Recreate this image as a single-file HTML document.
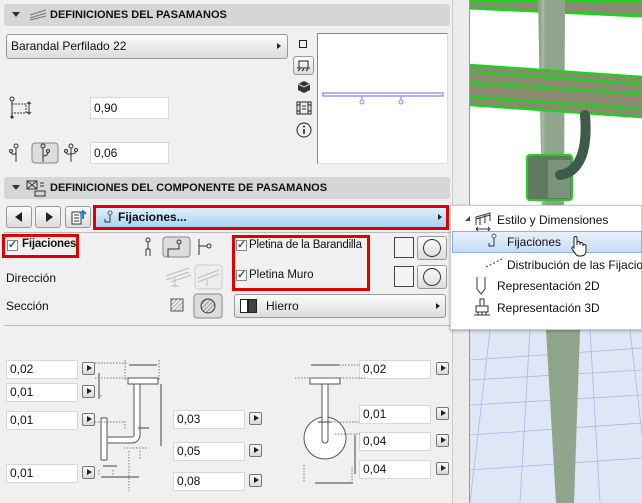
<!DOCTYPE html>
<html><head><meta charset="utf-8"><style>
*{box-sizing:border-box;margin:0;padding:0}
body{width:642px;height:503px;overflow:hidden;background:#f0f0f0;font-family:"Liberation Sans",sans-serif;font-size:11px;color:#111;position:relative}
.a{position:absolute}
.hdr{position:absolute;left:4px;width:446px;height:22px;background:#d6d6d6;border-radius:3px;font-weight:bold;font-size:11px;line-height:22px}
.inp{position:absolute;width:72px;height:19px;background:#fff;border:1px solid #d8d8d8;font-size:12px;line-height:17px;padding-left:3px}
.ab{position:absolute;width:13px;height:13px;border:1px solid #777;border-radius:2px;background:linear-gradient(#fafafa,#d8d8d8)}
.ab:after{content:"";position:absolute;left:4px;top:2px;border-left:5px solid #222;border-top:3.5px solid transparent;border-bottom:3.5px solid transparent}
.btn{position:absolute;border:1px solid #999;border-radius:3px;background:linear-gradient(#fcfcfc,#dcdcdc)}
.red{position:absolute;border:3px solid #e00000}
.cb{position:absolute;width:11px;height:11px;border:1px solid #888;background:#fff;font-size:11px;line-height:9px;color:#2a4fb0;text-align:center;font-weight:bold}
</style></head><body>
<div class="hdr" style="top:4px"><span class="a" style="left:8px;top:8px;border-top:5px solid #333;border-left:4px solid transparent;border-right:4px solid transparent"></span>
<svg class="a" style="left:25px;top:5px" width="18" height="12"><path d="M1 6 L17 1 M1 9 L17 4 M1 11 L17 7" stroke="#777" fill="none"/></svg>
<span class="a" style="left:46px">DEFINICIONES DEL PASAMANOS</span></div>
<div class="btn" style="left:6px;top:34px;width:282px;height:25px;border-radius:3px;font-size:12px;line-height:23px;padding-left:4px">Barandal Perfilado 22<span class="a" style="right:6px;top:8px;border-left:4px solid #222;border-top:3.5px solid transparent;border-bottom:3.5px solid transparent"></span></div>
<div class="a" style="left:299px;top:40px;width:8px;height:8px;border:1px solid #222"></div>
<div class="btn" style="left:293px;top:56px;width:21px;height:19px"><svg width="19" height="17"><path d="M5 11V4h9v7M3 11h13M4 14l2-2M8 14l2-2M12 14l2-2" stroke="#222" fill="none"/></svg></div>
<svg class="a" style="left:297px;top:80px" width="14" height="14"><path d="M7 1 L13 4 L13 10 L7 13 L1 10 L1 4Z" fill="#333"/><path d="M1 4 L7 7 L13 4" stroke="#ddd" fill="none"/></svg>
<svg class="a" style="left:296px;top:101px" width="16" height="14"><rect x="1" y="1" width="14" height="12" fill="none" stroke="#222"/><path d="M4 1v12M12 1v12M6 5h4M6 8h4M1 4h3M1 10h3M12 4h3M12 10h3" stroke="#222"/></svg>
<svg class="a" style="left:296px;top:122px" width="16" height="16"><circle cx="8" cy="8" r="7" fill="none" stroke="#222"/><path d="M8 7v5" stroke="#222" stroke-width="1.6"/><circle cx="8" cy="4.5" r="1" fill="#222"/></svg>
<div class="a" style="left:317px;top:33px;width:131px;height:131px;background:#fff;border:1px solid #888;border-right-color:#ddd;border-bottom-color:#ddd"></div>
<svg class="a" style="left:318px;top:90px" width="128" height="16"><rect x="5" y="3" width="120" height="3" fill="none" stroke="#8888ee" stroke-width="1.3"/><circle cx="44" cy="12" r="2" fill="none" stroke="#8888ee"/><circle cx="83" cy="12" r="2" fill="none" stroke="#8888ee"/><path d="M44 6v4M83 6v4" stroke="#8888ee"/></svg>
<svg class="a" style="left:8px;top:96px" width="24" height="24"><circle cx="4" cy="3" r="2" fill="none" stroke="#333"/><path d="M4 5v15" stroke="#333"/><path d="M4 8h14v9H4" stroke="#333" stroke-dasharray="2 1" fill="none"/><path d="M21 6v12M19 8l2-2 2 2M19 16l2 2 2-2" stroke="#333" fill="none"/><path d="M2 21l2-2 2 2-2 2z" fill="#333"/></svg>
<div class="inp" style="left:90px;top:97px;width:79px;height:22px;line-height:20px">0,90</div>
<svg class="a" style="left:8px;top:142px" width="82" height="22"><g stroke="#333" fill="none"><circle cx="8" cy="4" r="2"/><path d="M8 6v14M3 10c0 3 5 3 5 0"/><circle cx="3" cy="9" r="1.5"/></g><rect x="24" y="1" width="26" height="20" rx="3" fill="#ddd" stroke="#888"/><g stroke="#333" fill="none"><circle cx="35" cy="4" r="2"/><path d="M35 6v14M35 14c4 0 5-2 5-4"/><circle cx="40" cy="9" r="1.5"/><circle cx="63" cy="4" r="2"/><path d="M63 6v14M58 10c0 3 5 3 5 0M63 12c3 0 5-1 5-3"/><circle cx="58" cy="9" r="1.5"/><circle cx="68" cy="8" r="1.5"/></g></svg>
<div class="inp" style="left:90px;top:142px;width:79px;height:22px;line-height:20px">0,06</div>
<div class="hdr" style="top:177px"><span class="a" style="left:8px;top:8px;border-top:5px solid #333;border-left:4px solid transparent;border-right:4px solid transparent"></span>
<svg class="a" style="left:22px;top:3px" width="20" height="17"><rect x="1" y="1" width="10" height="8" fill="none" stroke="#333"/><path d="M1 1l10 8M11 1L1 9M14 3h4M14 6h4M9 11h10v5H9z" stroke="#333" fill="none"/></svg>
<span class="a" style="left:46px">DEFINICIONES DEL COMPONENTE DE PASAMANOS</span></div>
<div class="btn" style="left:6px;top:206px;width:26px;height:22px"><span class="a" style="left:8px;top:5px;border-right:7px solid #222;border-top:5px solid transparent;border-bottom:5px solid transparent"></span></div>
<div class="btn" style="left:35px;top:206px;width:26px;height:22px"><span class="a" style="left:10px;top:5px;border-left:7px solid #222;border-top:5px solid transparent;border-bottom:5px solid transparent"></span></div>
<div class="btn" style="left:65px;top:206px;width:26px;height:22px"><svg width="24" height="20"><path d="M6 5h9v12H6z" fill="#fff" stroke="#333"/><path d="M8 8h5M8 11h5M8 14h5" stroke="#333"/><path d="M17 12V4M14 7l3-3 3 3" stroke="#2a7be0" stroke-width="2" fill="none"/></svg></div>
<div class="a" style="left:96px;top:208px;width:350px;height:19px;background:linear-gradient(#dff0fc,#a9d3f2);font-weight:bold;font-size:12px;line-height:19px;padding-left:22px">Fijaciones...<svg class="a" style="left:6px;top:2px" width="12" height="15"><circle cx="8" cy="3" r="2" fill="none" stroke="#666"/><path d="M8 5v7H3V9" stroke="#333" fill="none"/></svg><span class="a" style="right:4px;top:6px;border-left:4px solid #222;border-top:3.5px solid transparent;border-bottom:3.5px solid transparent"></span></div>
<div class="red" style="left:93px;top:205px;width:356px;height:25px"></div>
<div class="a" style="left:4px;top:232px;width:446px;height:1px;background:#bbb"></div>
<div class="cb" style="left:7px;top:240px">✓</div>
<div class="a" style="left:22px;top:238px;font-weight:bold;font-size:11.5px;letter-spacing:-0.2px">Fijaciones</div>
<div class="red" style="left:2px;top:234px;width:77px;height:24px"></div>
<svg class="a" style="left:143px;top:236px" width="72" height="22"><g stroke="#333" fill="none"><circle cx="5" cy="4" r="2"/><path d="M5 6v7M3 13v7M7 13v7M3 13h4"/></g><rect x="20" y="1" width="27" height="20" rx="3" fill="#ddd" stroke="#888"/><g stroke="#333" fill="none"><circle cx="36" cy="6" r="2"/><path d="M36 8v5H25v8"/><path d="M56 3v16M56 10h8"/><circle cx="66" cy="10" r="2"/></g></svg>
<div class="a" style="left:6px;top:271px;font-size:12px">Dirección</div>
<svg class="a" style="left:165px;top:264px" width="58" height="26"><g stroke="#bbb" fill="none"><path d="M1 12L24 4M1 16L24 8M6 18L26 11M10 14v8M6 22h8"/><rect x="30" y="1" width="27" height="24" rx="3" fill="#eee" stroke="#ccc"/><path d="M33 14L54 6M33 18L54 10M42 16v6"/></g></svg>
<div class="a" style="left:6px;top:299px;font-size:12px">Sección</div>
<svg class="a" style="left:170px;top:293px" width="54" height="26"><defs><pattern id="h" width="3" height="3" patternUnits="userSpaceOnUse" patternTransform="rotate(45)"><path d="M0 0v3" stroke="#777" stroke-width="1.2"/></pattern></defs><rect x="1" y="6" width="12" height="12" fill="url(#h)" stroke="#555"/><rect x="24" y="1" width="28" height="24" rx="3" fill="#ddd" stroke="#888"/><circle cx="38" cy="13" r="7" fill="url(#h)" stroke="#333"/></svg>
<div class="cb" style="left:236px;top:240px">✓</div>
<div class="a" style="left:249px;top:239px;font-size:11.5px;letter-spacing:-0.2px">Pletina de la Barandilla</div>
<div class="cb" style="left:236px;top:270px">✓</div>
<div class="a" style="left:249px;top:269px;font-size:11.5px">Pletina Muro</div>
<div class="red" style="left:232px;top:235px;width:138px;height:56px"></div>
<div class="a" style="left:394px;top:237px;width:20px;height:21px;border:1px solid #444;background:#f4f4f4"></div>
<div class="btn" style="left:417px;top:236px;width:30px;height:24px"><div class="a" style="left:5px;top:2px;width:18px;height:18px;border:1px solid #333;border-radius:50%"></div></div>
<div class="a" style="left:394px;top:266px;width:20px;height:21px;border:1px solid #444;background:#f4f4f4"></div>
<div class="btn" style="left:417px;top:265px;width:30px;height:24px"><div class="a" style="left:5px;top:2px;width:18px;height:18px;border:1px solid #333;border-radius:50%"></div></div>
<div class="btn" style="left:234px;top:294px;width:212px;height:24px;font-size:12px;line-height:22px;padding-left:31px">Hierro<div class="a" style="left:5px;top:4px;width:8px;height:14px;border:1px solid #222;background:#fff"></div><div class="a" style="left:13px;top:4px;width:9px;height:14px;border:1px solid #222;background:#444"></div><span class="a" style="right:5px;top:8px;border-left:4px solid #222;border-top:3.5px solid transparent;border-bottom:3.5px solid transparent"></span></div>
<div class="a" style="left:4px;top:325px;width:446px;height:1px;background:#bbb"></div>
<div class="inp" style="left:6px;top:360px">0,02</div><div class="ab" style="left:82px;top:362px"></div>
<div class="inp" style="left:6px;top:383px">0,01</div><div class="ab" style="left:82px;top:385px"></div>
<div class="inp" style="left:6px;top:411px">0,01</div><div class="ab" style="left:82px;top:413px"></div>
<div class="inp" style="left:6px;top:464px">0,01</div><div class="ab" style="left:82px;top:466px"></div>
<div class="inp" style="left:173px;top:410px">0,03</div><div class="ab" style="left:249px;top:412px"></div>
<div class="inp" style="left:173px;top:442px">0,05</div><div class="ab" style="left:249px;top:444px"></div>
<div class="inp" style="left:173px;top:472px">0,08</div><div class="ab" style="left:249px;top:474px"></div>
<div class="inp" style="left:359px;top:360px">0,02</div><div class="ab" style="left:436px;top:362px"></div>
<div class="inp" style="left:359px;top:405px">0,01</div><div class="ab" style="left:436px;top:407px"></div>
<div class="inp" style="left:359px;top:432px">0,04</div><div class="ab" style="left:436px;top:434px"></div>
<div class="inp" style="left:359px;top:460px">0,04</div><div class="ab" style="left:436px;top:462px"></div>
<svg class="a" style="left:95px;top:355px" width="80" height="140"><g fill="#fff" stroke="#555"><rect x="33" y="23" width="30" height="6"/><path d="M45 29v51a8 8 0 0 1-8 8H12v-6h25a2 2 0 0 0 2-2V29z"/><rect x="6" y="63" width="6" height="42"/></g><g stroke="#444" fill="none"><path d="M34 10h28M4 18v26M43 73h11M6 122h38M66 29v62M8 111h14"/></g><g stroke="#777" stroke-dasharray="1.5 1.5" fill="none"><path d="M0 8h33M0 23h33M5 41h3M0 67h30M30 66v8M29 93h24M34 96v40M45 96v8M30 5v20M64 5v20M4 115v6M18 115v6"/></g></svg>
<svg class="a" style="left:295px;top:355px" width="70" height="135"><g fill="#fff" stroke="#555"><rect x="15" y="23" width="30" height="6"/><circle cx="30" cy="83" r="21"/><path d="M27 29v56a3 3 0 0 0 6 0V29z"/></g><g stroke="#444" fill="none"><path d="M16 10h28M23 67h14M20 128h38M60 80v39"/></g><g stroke="#777" stroke-dasharray="1.5 1.5" fill="none"><path d="M44 10h20M0 23h70M36 67h28M40 79h25M9 110v18M57 112v18"/></g></svg>
<div class="a" style="left:452px;top:0;width:18px;height:503px;background:#ececec;border-left:1px solid #ccc"></div>
<div class="a" style="left:469px;top:0;width:1px;height:503px;background:#999"></div>
<div class="a" style="left:470px;top:0;width:172px;height:205px;background:#fff;overflow:hidden">
<svg width="172" height="205"><path d="M0 0h172v16L0 8z" fill="#8a8a74"/><path d="M0 1h172M0 8l172 8" stroke="#1fd01f" stroke-width="3"/>
<path d="M68 0h27l-1 205H72z" fill="#8fa68c"/><path d="M73 0v205" stroke="#a4b8a0" stroke-width="3"/><path d="M0 65l172 12v40L0 105z" fill="#8a8a70"/><path d="M0 65l172 12M0 72l172 12M0 83l172 11M0 97l172 12M0 105l172 12" stroke="#1fd01f" stroke-width="2.5"/>
<rect x="57" y="155" width="45" height="45" rx="3" fill="#5f7a5f" stroke="#1fd01f" stroke-width="2"/><path d="M78 160h22v38H78z" fill="#8fa68c" opacity="0.6"/><path d="M90 175c20-3 28-25 25-60" stroke="#3f5a48" stroke-width="10" fill="none" stroke-linecap="round"/></svg></div>
<div class="a" style="left:470px;top:330px;width:172px;height:173px;background:#dfe6f5;overflow:hidden">
<svg width="172" height="173"><g stroke="#aab8e0" stroke-width="0.8"><path d="M0 30l172-12M0 50l172-10M0 75l172-10M0 105l172-12M0 140l172-12M20 0l-20 173M60 0l-10 173M120 0l10 173M160 0l20 173"/></g><path d="M76 0h34l-6 173H86z" fill="#8fa68c"/></svg></div>
<div class="a" style="left:450px;top:205px;width:192px;height:125px;background:#fff;border:1px solid #ccc;box-shadow:0 1px 3px rgba(0,0,0,.3)"></div>
<span class="a" style="left:465px;top:216px;border-left:5px solid transparent;border-bottom:5px solid #444"></span>
<svg class="a" style="left:474px;top:211px" width="18" height="20"><path d="M2 14V6l14-4v8M2 8l14-4M6 6v8M11 4v8M2 18h14M2 18l2-2M2 18l2 2M16 18l-2-2M16 18l-2 2" stroke="#333" fill="none"/></svg>
<div class="a" style="left:497px;top:213px;font-size:12px">Estilo y Dimensiones</div>
<div class="a" style="left:452px;top:231px;width:190px;height:22px;background:linear-gradient(#e8f1fc,#c6dcf6);border:1px solid #8cb0e0"></div>
<svg class="a" style="left:486px;top:233px" width="12" height="16"><circle cx="8" cy="3" r="2" fill="none" stroke="#666"/><path d="M8 5v8H3v-3" stroke="#333" fill="none"/></svg>
<div class="a" style="left:507px;top:235px;font-size:12px">Fijaciones</div>
<svg class="a" style="left:569px;top:235px" width="20" height="22"><path d="M5 14V3a1.5 1.5 0 0 1 3 0v7V8a1.5 1.5 0 0 1 3 0v2-1a1.5 1.5 0 0 1 3 0v2a1.5 1.5 0 0 1 3 0v5c0 3-2 5-5 5h-2c-2 0-3-1-4-3l-3-4a1.5 1.5 0 0 1 2-2z" fill="#fff" stroke="#222"/></svg>
<svg class="a" style="left:485px;top:258px" width="18" height="10"><path d="M1 9l16-8" stroke="#333" stroke-dasharray="2 2"/></svg>
<div class="a" style="left:507px;top:258px;font-size:12px;white-space:nowrap">Distribución de las Fijaciones</div>
<svg class="a" style="left:475px;top:276px" width="12" height="20"><path d="M2 1v12l4 5 4-5V1" stroke="#333" fill="none"/></svg>
<div class="a" style="left:497px;top:279px;font-size:12px">Representación 2D</div>
<svg class="a" style="left:473px;top:298px" width="18" height="20"><path d="M7 1h4v7H7zM3 8h12v6H3zM1 17h16M5 14v3M9 14v3M13 14v3" stroke="#333" fill="none"/></svg>
<div class="a" style="left:497px;top:301px;font-size:12px">Representación 3D</div>
</body></html>
